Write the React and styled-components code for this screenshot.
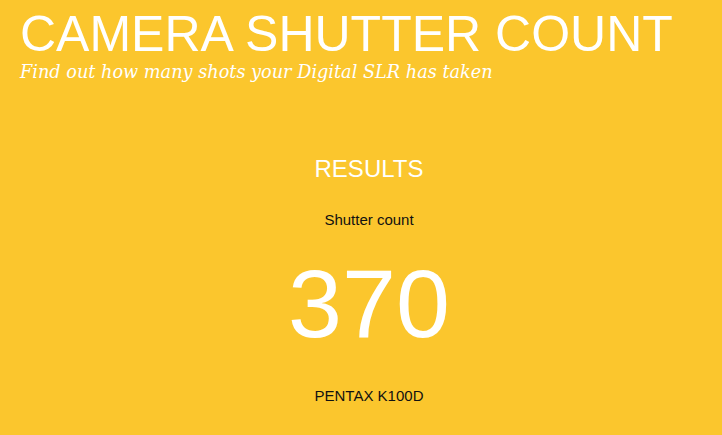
import React from "react";
import styled, { createGlobalStyle } from "styled-components";

const Global = createGlobalStyle`
  html, body { margin: 0; padding: 0; background: #fbc62d; }
  body { font-family: "Liberation Sans", Arial, sans-serif; }
`;

const Page = styled.div`
  min-height: 435px;
  background: #fbc62d;
  overflow: hidden;
`;

const Header = styled.header`
  padding: 7px 20px 0 20px;
`;

const Title = styled.h1`
  margin: 0;
  font-family: "Liberation Sans", Arial, sans-serif;
  font-weight: normal;
  font-size: 50px;
  line-height: 55px;
  color: #ffffff;
  white-space: nowrap;
`;

const Tagline = styled.p`
  margin: 0;
  font-family: "DejaVu Serif", Georgia, serif;
  font-style: italic;
  font-size: 17.7px;
  line-height: 20px;
  color: #ffffff;
  white-space: nowrap;
`;

const Results = styled.section`
  display: flex;
  flex-direction: column;
  align-items: center;
  padding-left: 16px;
  margin-top: 73px;
`;

const Heading = styled.h2`
  margin: 0;
  font-weight: normal;
  font-size: 24px;
  line-height: 28px;
  color: #ffffff;
`;

const Label = styled.div`
  font-size: 15px;
  line-height: 18px;
  color: #111111;
  margin-top: ${(p) => p.$gap}px;
`;

const Count = styled.div`
  font-size: 97px;
  line-height: 96px;
  color: #ffffff;
  margin-top: 27px;
`;

export default function App() {
  return (
    <Page>
      <Global />
      <Header>
        <Title>CAMERA SHUTTER COUNT</Title>
        <Tagline>Find out how many shots your Digital SLR has taken</Tagline>
      </Header>
      <Results>
        <Heading>RESULTS</Heading>
        <Label $gap={28}>Shutter count</Label>
        <Count>370</Count>
        <Label $gap={35}>PENTAX K100D</Label>
      </Results>
    </Page>
  );
}
